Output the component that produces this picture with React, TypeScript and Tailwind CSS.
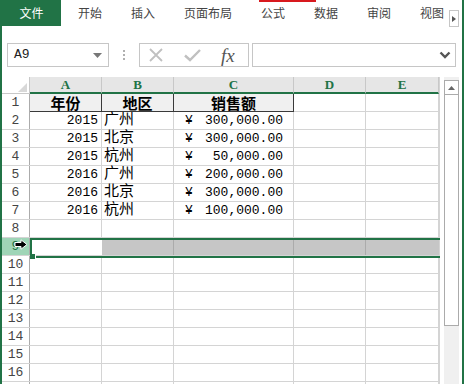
const GREEN = '#217346';

const TABS = ['开始', '插入', '页面布局', '公式', '数据', '审阅', '视图'];

const COLS = [
  { key: 'A', w: 'w-[72px]' },
  { key: 'B', w: 'w-[72px]' },
  { key: 'C', w: 'w-[120px]' },
  { key: 'D', w: 'w-[72px]' },
  { key: 'E', w: 'w-[73px]' },
];

const DATA = [
  { year: '2015', city: '广州', amount: '300,000.00' },
  { year: '2015', city: '北京', amount: '300,000.00' },
  { year: '2015', city: '杭州', amount: '50,000.00' },
  { year: '2016', city: '广州', amount: '200,000.00' },
  { year: '2016', city: '北京', amount: '300,000.00' },
  { year: '2016', city: '杭州', amount: '100,000.00' },
];

const mono = "font-['Liberation_Mono','Noto_Sans_CJK_SC',monospace] text-[13px]";
const cjk = "font-['Noto_Sans_CJK_SC','Noto_Sans',sans-serif] text-[15px] leading-[17px]";

function RowHeader({ n }: { n?: number }) {
  return (
    <div className={`w-[28px] shrink-0 h-full border-r border-[#ababab] flex items-center justify-center text-[#444] ${mono}`}>
      {n}
    </div>
  );
}

function EmptyRow({ n }: { n?: number }) {
  return (
    <div className="flex h-[18px] border-b border-[#d4d4d4] shrink-0">
      <RowHeader n={n} />
      {COLS.map(c => (
        <div key={c.key} className={`${c.w} shrink-0 h-full border-r border-[#d4d4d4]`} />
      ))}
    </div>
  );
}

export default function App() {
  return (
    <div className="w-[464px] h-[384px] bg-white border-x-2 border-[#217346] overflow-hidden flex flex-col relative">
      {/* red marker on top edge */}
      <div className="absolute top-0 left-[257px] w-[57px] h-[2px] bg-[#d8191e]" />

      {/* Tabs */}
      <div className="flex h-[26px] shrink-0 items-stretch font-['Noto_Sans_CJK_SC',sans-serif] text-[12px]">
        <div className="w-[59px] flex items-center justify-center text-white" style={{ background: GREEN }}>
          文件
        </div>
        <div className="flex items-center gap-[29px] pl-[17px] text-[#444]">
          {TABS.map(t => (
            <span key={t}>{t}</span>
          ))}
        </div>
        <div className="ml-auto mr-[3px] mt-[10px] w-[10px] h-[17px] border border-[#c6c6c6] flex items-center justify-center">
          <svg width="4" height="6" viewBox="0 0 4 6">
            <path d="M0 0 L4 3 L0 6 Z" fill="#555" />
          </svg>
        </div>
      </div>

      {/* Formula bar */}
      <div className="flex h-[24px] mt-[17px] shrink-0 items-stretch">
        <div className="ml-[5px] w-[102px] border border-[#c6c6c6] flex items-center justify-between pl-[6px] pr-[6px]">
          <span className={`${mono} text-[#222]`}>A9</span>
          <svg width="9" height="5" viewBox="0 0 9 5">
            <path d="M0 0 H9 L4.5 5 Z" fill="#777" />
          </svg>
        </div>
        <div className="ml-[13px] w-[3px] flex flex-col items-center justify-center gap-[2px]">
          <div className="w-[2px] h-[2px] bg-[#b0b0b0]" />
          <div className="w-[2px] h-[2px] bg-[#b0b0b0]" />
          <div className="w-[2px] h-[2px] bg-[#b0b0b0]" />
        </div>
        <div className="ml-[14px] w-[110px] border border-[#c6c6c6] flex items-center">
          <svg className="ml-[8px]" width="16" height="14" viewBox="0 0 16 14">
            <path d="M2 1 L14 13 M14 1 L2 13" stroke="#c0c0c0" strokeWidth="1.8" />
          </svg>
          <svg className="ml-[20px]" width="17" height="14" viewBox="0 0 17 14">
            <path d="M1 7.5 L6 12 L16 2" stroke="#c0c0c0" strokeWidth="2.4" fill="none" />
          </svg>
          <span className="ml-[20px] font-['Liberation_Serif',serif] italic text-[19px] text-[#555] leading-none">
            fx
          </span>
        </div>
        <div className="ml-[3px] w-[204px] border border-[#c6c6c6] flex items-center justify-end pr-[4px]">
          <svg width="12" height="8" viewBox="0 0 12 8">
            <path d="M1.5 1.5 L6 6 L10.5 1.5" stroke="#555" strokeWidth="2.4" fill="none" />
          </svg>
        </div>
      </div>

      {/* Sheet */}
      <div className="flex mt-[10px] flex-1 min-h-0">
        <div className="flex flex-col border-r border-[#d4d4d4]">
          {/* column headers */}
          <div className="flex h-[17px] shrink-0">
            <div className="w-[28px] shrink-0 bg-white border-r border-b border-[#c8c8c8] flex items-end justify-end pr-[2px] pb-[1px]">
              <svg width="9" height="9" viewBox="0 0 9 9">
                <path d="M9 0 V9 H0 Z" fill="#d8d8d8" />
              </svg>
            </div>
            {COLS.map(c => (
              <div
                key={c.key}
                className={`${c.w} shrink-0 bg-[#e6e6e6] border-r border-[#c8c8c8] border-b-2 border-b-[#217346] flex items-center justify-center font-['Liberation_Serif',serif] font-bold text-[13px] text-[#217346] leading-none`}
              >
                {c.key}
              </div>
            ))}
          </div>

          {/* row 1 header */}
          <div className="flex h-[18px] shrink-0">
            <RowHeader n={1} />
            <div className={`w-[72px] shrink-0 bg-[#f0f0f0] border-r border-b border-[#3a3a3a] text-center font-bold ${cjk}`}>
              年份
            </div>
            <div className={`w-[72px] shrink-0 bg-[#f0f0f0] border-r border-b border-[#3a3a3a] text-center font-bold ${cjk}`}>
              地区
            </div>
            <div className={`w-[120px] shrink-0 bg-[#f0f0f0] border-r border-b border-[#3a3a3a] text-center font-bold ${cjk}`}>
              销售额
            </div>
            <div className="w-[72px] shrink-0 border-r border-b border-[#d4d4d4]" />
            <div className="w-[73px] shrink-0 border-r border-b border-[#d4d4d4]" />
          </div>

          {/* data rows */}
          {DATA.map((d, i) => (
            <div key={i} className="flex h-[18px] border-b border-[#d4d4d4] shrink-0">
              <RowHeader n={i + 2} />
              <div className={`w-[72px] shrink-0 border-r border-[#d4d4d4] flex items-center justify-end pr-[3px] ${mono}`}>
                {d.year}
              </div>
              <div className="w-[72px] shrink-0 border-r border-[#d4d4d4] pl-[2px] flex items-center pb-[7px] font-['Noto_Sans_CJK_SC','Noto_Sans',sans-serif] text-[15px] leading-none">
                {d.city}
              </div>
              <div className={`w-[120px] shrink-0 border-r border-[#d4d4d4] flex items-center justify-between pl-[11px] pr-[10px] ${mono}`}>
                <span>¥</span>
                <span>{d.amount}</span>
              </div>
              <div className="w-[72px] shrink-0 border-r border-[#d4d4d4]" />
              <div className="w-[73px] shrink-0 border-r border-[#d4d4d4]" />
            </div>
          ))}

          <EmptyRow n={8} />

          {/* row 9 - selected */}
          <div className="flex h-[18px] border-b border-[#d4d4d4] shrink-0 relative">
            <div className={`w-[28px] shrink-0 h-full border-r border-[#ababab] bg-[#9fd5b7] flex items-center justify-center text-[#217346] relative ${mono}`}>
              9
              <svg className="absolute left-[12px] top-[1px]" width="14" height="11" viewBox="0 0 14 11">
                <path d="M1 3.5 H7 V0.8 L13 5.5 L7 10.2 V7.5 H1 Z" fill="#000" stroke="#fff" strokeWidth="1" />
              </svg>
            </div>
            <div className="w-[72px] shrink-0 h-full bg-white" />
            <div className="w-[72px] shrink-0 h-full bg-[#c6c6c6] border-r border-[#ababab]" />
            <div className="w-[120px] shrink-0 h-full bg-[#c6c6c6] border-r border-[#ababab]" />
            <div className="w-[72px] shrink-0 h-full bg-[#c6c6c6] border-r border-[#ababab]" />
            <div className="w-[73px] shrink-0 h-full bg-[#c6c6c6]" />
            {/* selection outline */}
            <div className="absolute left-[28px] top-0 w-[410px] h-[20px] border-2 border-[#217346] border-r-0" />
            <div className="absolute left-[28px] top-[16px] w-[6px] h-[5px] bg-[#217346] border-r border-white" />
          </div>

          {[10, 11, 12, 13, 14, 15, 16].map(n => (
            <EmptyRow key={n} n={n} />
          ))}
          <EmptyRow />
        </div>

        {/* vertical scrollbar */}
        <div className="ml-[4px] w-[15px] bg-[#f0f0f0] flex flex-col pt-[3px]">
          <div className="w-[15px] h-[14px] bg-white border border-[#ababab] border-b-0 flex items-center justify-center">
            <svg width="7" height="4" viewBox="0 0 7 4">
              <path d="M0 4 L3.5 0 L7 4 Z" fill="#666" />
            </svg>
          </div>
          <div className="w-[15px] h-[232px] bg-white border border-[#ababab]" />
        </div>
      </div>
    </div>
  );
}
